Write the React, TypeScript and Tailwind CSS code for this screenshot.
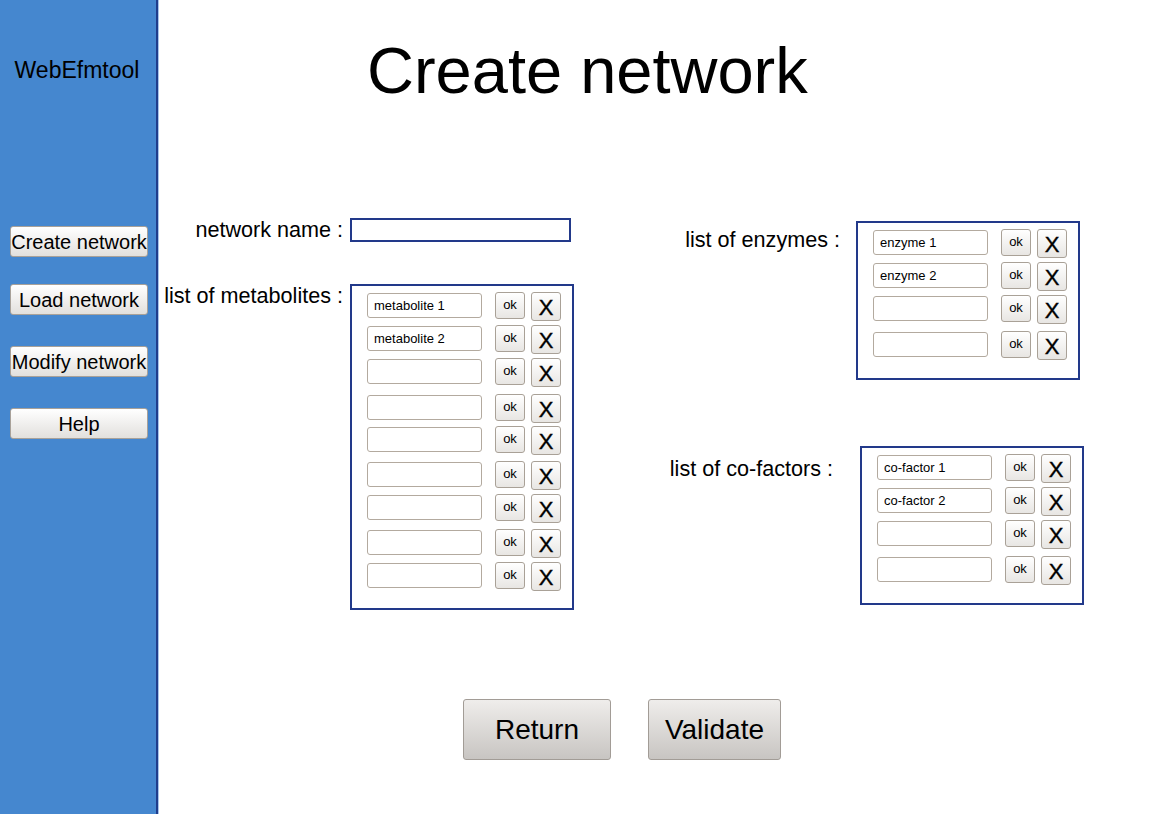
import React from "react";

type Row = { value: string; h: string };

const metabolites: Row[] = [
  { value: "metabolite 1", h: "h-[33px]" },
  { value: "metabolite 2", h: "h-[33px]" },
  { value: "", h: "h-[36px]" },
  { value: "", h: "h-[32px]" },
  { value: "", h: "h-[35px]" },
  { value: "", h: "h-[33px]" },
  { value: "", h: "h-[35px]" },
  { value: "", h: "h-[33px]" },
  { value: "", h: "h-[31px]" },
];

const enzymes: Row[] = [
  { value: "enzyme 1", h: "h-[33px]" },
  { value: "enzyme 2", h: "h-[33px]" },
  { value: "", h: "h-[36px]" },
  { value: "", h: "h-[31px]" },
];

const cofactors: Row[] = [
  { value: "co-factor 1", h: "h-[33px]" },
  { value: "co-factor 2", h: "h-[33px]" },
  { value: "", h: "h-[36px]" },
  { value: "", h: "h-[31px]" },
];

function SideButton({ label, className }: { label: string; className: string }) {
  return (
    <button
      type="button"
      className={`ml-[10px] flex h-[31px] w-[138px] items-center justify-center whitespace-nowrap rounded-[3px] border border-[#a8a199] bg-gradient-to-b from-white to-[#e2e0dd] text-[20px] leading-none text-black ${className}`}
    >
      {label}
    </button>
  );
}

function ItemRow({ row }: { row: Row }) {
  return (
    <div className={`flex items-start ${row.h}`}>
      <input
        readOnly
        value={row.value}
        className="mt-[2px] h-[25px] w-[115px] rounded-[3px] border border-[#b3aa9f] bg-white px-[6px] text-[13px] text-black outline-none"
      />
      <button
        type="button"
        className="ml-[13px] mt-[1px] flex h-[27px] w-[30px] items-center justify-center rounded-[3px] border border-[#a9a197] bg-gradient-to-b from-white to-[#e8e6e3] pb-[3px] text-[13px] leading-none text-black"
      >
        ok
      </button>
      <button
        type="button"
        className="ml-[6px] mt-[1px] flex h-[29px] w-[30px] items-center justify-center rounded-[3px] border border-[#a9a197] bg-gradient-to-b from-white to-[#e8e6e3] pt-[3px] text-[22px] leading-none text-black [-webkit-text-stroke:0.4px_black]"
      >
        X
      </button>
    </div>
  );
}

function ListBox({ rows, className }: { rows: Row[]; className: string }) {
  return (
    <div className={`w-[224px] border-2 border-[#22398a] bg-white pl-[15px] pt-[5px] ${className}`}>
      {rows.map((row, i) => (
        <ItemRow key={i} row={row} />
      ))}
    </div>
  );
}

export default function App() {
  return (
    <div className="flex min-h-screen bg-white font-['Liberation_Sans',Arial,sans-serif] text-black">
      <aside className="flex h-[814px] w-[158px] shrink-0 flex-col border-r-2 border-[#1f3d8c] bg-[#4587cf] shadow-[1px_0_0_#a8c4ea]">
        <div className="pr-[2px] pt-[56px] text-center text-[23px] leading-[28px]">WebEfmtool</div>
        <SideButton label="Create network" className="mt-[142px]" />
        <SideButton label="Load network" className="mt-[27px]" />
        <SideButton label="Modify network" className="mt-[31px]" />
        <SideButton label="Help" className="mt-[31px]" />
      </aside>

      <main className="flex-1">
        <h1 className="pl-[209px] pt-[38px] text-[65px] font-normal leading-none">Create network</h1>

        <div className="mt-[115px] flex items-start">
          <div className="grid grid-cols-[185px_auto] gap-x-[7px]">
            <div className="text-right text-[21.6px] leading-[24px]">network name :</div>
            <div className="h-[24px] w-[221px] border-2 border-[#22398a]" />
            <div className="mt-[42px] text-right text-[21.6px] leading-[24px]">list of metabolites :</div>
            <ListBox rows={metabolites} className="mt-[42px] h-[326px]" />
          </div>

          <div className="ml-[86px] mt-[3px] flex flex-col">
            <div className="flex items-start">
              <div className="mt-[7px] w-[180px] text-right text-[21.6px] leading-[24px]">list of enzymes :</div>
              <ListBox rows={enzymes} className="ml-[16px] h-[159px]" />
            </div>
            <div className="mt-[66px] flex items-start">
              <div className="mt-[11px] w-[173px] text-right text-[21.6px] leading-[24px]">list of co-factors :</div>
              <ListBox rows={cofactors} className="ml-[27px] h-[159px]" />
            </div>
          </div>
        </div>

        <div className="mt-[89px] flex gap-[37px] pl-[305px]">
          <button
            type="button"
            className="flex h-[61px] w-[148px] items-center justify-center rounded-[3px] border border-[#a29c96] bg-gradient-to-b from-[#efedeb] to-[#c8c5c2] text-[28px] leading-none text-black"
          >
            Return
          </button>
          <button
            type="button"
            className="flex h-[61px] w-[133px] items-center justify-center rounded-[3px] border border-[#a29c96] bg-gradient-to-b from-[#efedeb] to-[#c8c5c2] text-[28px] leading-none text-black"
          >
            Validate
          </button>
        </div>
      </main>
    </div>
  );
}
